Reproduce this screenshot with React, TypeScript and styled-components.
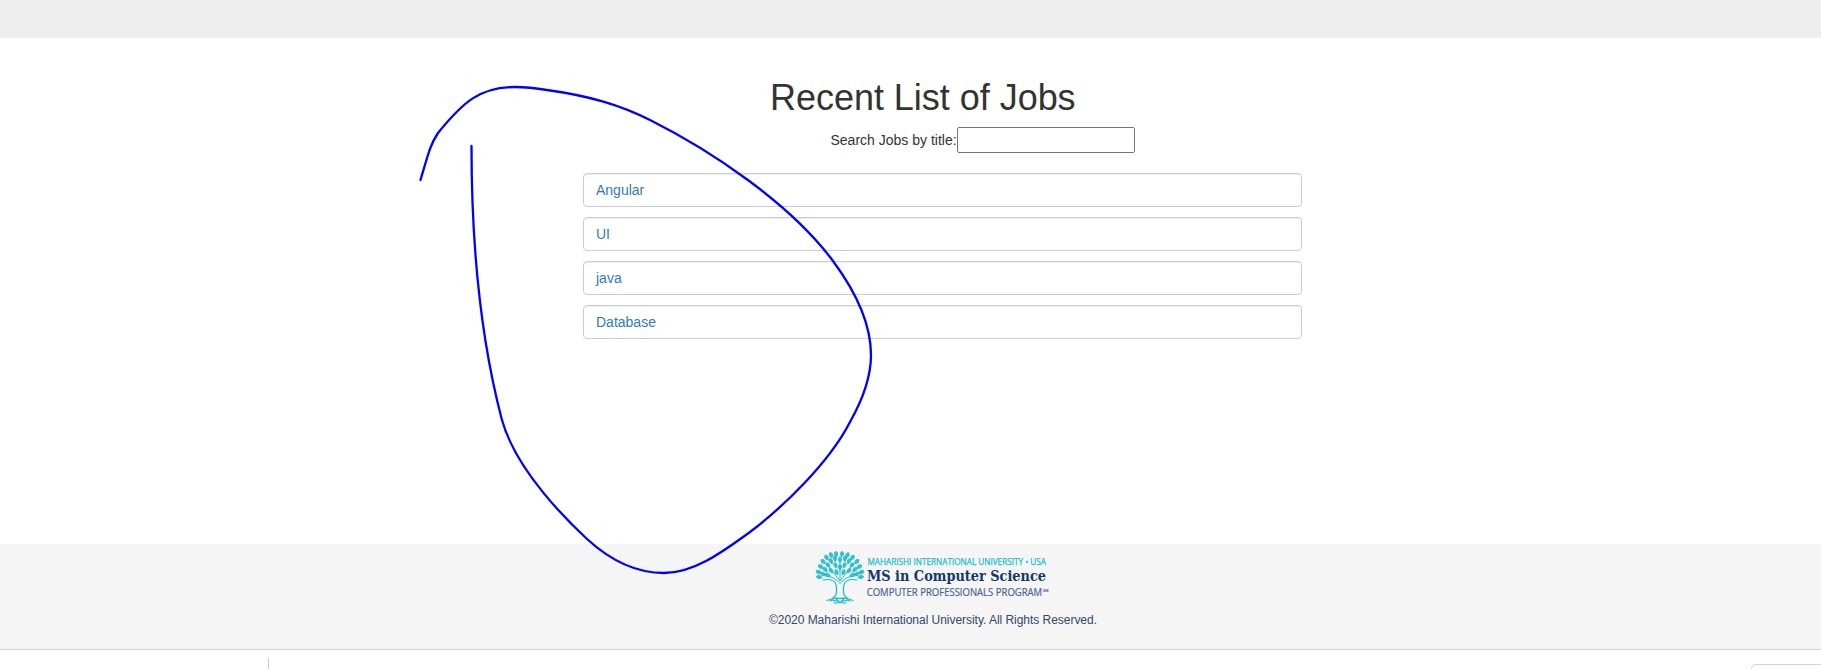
import React from "react";
import styled, { createGlobalStyle } from "styled-components";

const GlobalStyle = createGlobalStyle`
  * { box-sizing: border-box; }
  body {
    margin: 0;
    background: #fff;
    color: #333;
    font: 14px/20px "Liberation Sans", Arial, sans-serif;
    overflow: hidden;
  }
`;

const Page = styled.div`
  position: relative;
  display: flex;
  flex-direction: column;
  height: 669px;
`;
const TopBar = styled.header`
  height: 38px;
  flex: none;
  background: #eee;
`;
const Main = styled.main`
  height: 506px;
  flex: none;
  padding-top: 40px;
`;
const Title = styled.h1`
  margin: 0 0 9px 770px;
  font-size: 36px;
  font-weight: 400;
  line-height: 40px;
  letter-spacing: -0.03px;
`;
const SearchRow = styled.label`
  display: flex;
  align-items: center;
  margin-left: 830px;
  height: 26px;
`;
const SearchLabel = styled.span`
  width: 127px;
  padding-left: 0.5px;
  white-space: nowrap;
`;
const SearchInput = styled.input`
  width: 178px;
  height: 26px;
  border: 1px solid #767676;
  border-radius: 2px;
  padding: 1px 2px;
  font: inherit;
`;
const JobList = styled.ul`
  list-style: none;
  margin: 20px 0 0 583px;
  padding: 0;
  width: 719px;
  display: flex;
  flex-direction: column;
  gap: 10px;
`;
const JobItem = styled.li`
  height: 34px;
  padding: 6px 12px;
  border: 1px solid #ccc;
  border-radius: 4px;
  box-shadow: inset 0 1px 1px rgba(0, 0, 0, 0.075);
`;
const JobLink = styled.a`
  color: #337ab7;
  text-decoration: none;
`;
const Footer = styled.footer`
  height: 106px;
  flex: none;
  background: #f5f5f5;
  border-bottom: 1px solid #d5d5d5;
  padding-top: 6px;
`;
const Logo = styled.svg`
  display: block;
  width: 240px;
  height: 56px;
  margin-left: 814px;
`;
const Copyright = styled.p`
  margin: 4px 0 0 769px;
  font-size: 12px;
  line-height: 20px;
  letter-spacing: -0.035px;
  color: #34466a;
`;
const BottomStrip = styled.div`
  flex: 1;
  display: flex;
  justify-content: space-between;
  overflow: hidden;
`;
const Divider = styled.div`
  width: 1px;
  height: 11px;
  margin: 8px 0 0 268px;
  background: #ccc;
`;
const CornerBox = styled.div`
  width: 70px;
  height: 20px;
  margin-top: 14px;
  border: 1px solid #d5d5d5;
  border-right: 0;
  border-radius: 5px 0 0 0;
`;
const Ink = styled.svg`
  position: absolute;
  inset: 0;
  width: 1821px;
  height: 669px;
  pointer-events: none;
`;

const penStroke = [
  "M471.5 146",
  "C471.5 250 481 340 501.7 419",
  "C516 472 572 525 587 539",
  "C611 561 638 573 664 573",
  "C697 573 730 546 750 532",
  "C783 507 829 463 850 422",
  "C863 399 871 378 871 355",
  "C871 322 853 288 833 261",
  "C790 203 710 150 650 120",
  "C620 105 590 96 547 90",
  "C535 88 525 87 515 87",
  "C480 87 463 102 438 133",
  "C430 145 428 155 420.5 180",
].join("");

// Leaf positions: x, y, rotation in degrees from upright.
const leaves = [
  [5, 27, -80], [4.5, 22, -66], [9, 24, -62], [6.5, 16.5, -55], [11, 19.5, -48],
  [9, 11.5, -46], [14, 15, -38], [12.5, 7.5, -34], [17, 11, -25], [17, 5, -20],
  [21, 8.5, -12], [22, 4, -8], [26, 9.5, 0], [28, 4, 6], [31, 8.5, 12],
  [33.5, 5, 20], [35, 11, 25], [38.5, 7.5, 34], [38, 15, 38], [43, 11.5, 46],
  [41, 19.5, 48], [45.5, 16.5, 55], [43, 24, 62], [47.5, 22, 66], [47, 27, 80],
  [13.5, 25, -65], [17, 20.5, -38], [21.5, 15, -18], [30.5, 15, 18], [35, 20.5, 38], [38.500, 25, 65],
  [22.5, 22, -18], [29.5, 22, 18], [26, 17, 0],
];

function UniversityLogo() {
  return (
    <Logo viewBox="0 0 240 56">
      <g fill="#22bccb" fillOpacity=".92">
        {leaves.map(([x, y, r], i) => (
          <path key={i} transform={`translate(${x} ${y}) rotate(${r})`} d="M0 -3.2Q4.2 -.5 0 3.8Q-4.2 -.5 0 -3.2Z" />
        ))}
      </g>
      <g fill="none" stroke="#22bccb" strokeLinecap="round">
        <path strokeWidth="1.2" d="M9 30Q19 28 21.800 34Q23.500 39 22 45L18 49M43 30Q33 28 30.200 34Q28.500 39 30 45L34 49" />
        <path strokeWidth="1" d="M12 26Q20 27 24 31.500L26 33.500L28 31.500Q32 27 40 26M17 20Q22 26 26 31Q30 26 35 20M26 12V31" />
        <path strokeWidth="1.300" d="M13 50.500Q20 47 26 48.500Q32 47 39 50.500M16 51Q21 48.500 24 52.800M36 51Q31 48.500 28 52.800M21 48L24 50.500L26 53L28 50.500L31 48M20 52.500L22 53.500M32 52.500L30 53.500" />
      </g>
      <g fontFamily='"Open Sans", sans-serif'>
        <text x="53.500" y="15" fontSize="8.700" fill="#22bccb" stroke="#22bccb" strokeWidth=".25" textLength="178.500" lengthAdjust="spacingAndGlyphs">MAHARISHI INTERNATIONAL UNIVERSITY • USA</text>
        <text x="52.700" y="46" fontSize="9.900" fill="#4b6593" stroke="#4b6593" strokeWidth=".2" textLength="175.500" lengthAdjust="spacingAndGlyphs">COMPUTER PROFESSIONALS PROGRAM</text>
        <text x="229" y="42" fontSize="3.800" fontWeight="700" fill="#4b6593">SM</text>
      </g>
      <text x="53" y="31.300" fontFamily='"DejaVu Serif", serif' fontSize="14.400" fontWeight="700" fill="#14386d" textLength="179" lengthAdjust="spacingAndGlyphs">MS in Computer Science</text>
    </Logo>
  );
}

const jobs = ["Angular", "UI", "java", "Database"];

export default function App() {
  return (
    <Page>
      <GlobalStyle />
      <TopBar />
      <Main>
        <Title>Recent List of Jobs</Title>
        <SearchRow>
          <SearchLabel>Search Jobs by title:</SearchLabel>
          <SearchInput type="text" />
        </SearchRow>
        <JobList>
          {jobs.map((job) => (
            <JobItem key={job}>
              <JobLink href="#">{job}</JobLink>
            </JobItem>
          ))}
        </JobList>
      </Main>
      <Footer>
        <UniversityLogo />
        <Copyright>©2020 Maharishi International University. All Rights Reserved.</Copyright>
      </Footer>
      <BottomStrip>
        <Divider />
        <CornerBox />
      </BottomStrip>
      <Ink viewBox="0 0 1821 669">
        <path d={penStroke} fill="none" stroke="#00f" strokeWidth="2.300" strokeLinecap="round" strokeLinejoin="round" />
      </Ink>
    </Page>
  );
}
